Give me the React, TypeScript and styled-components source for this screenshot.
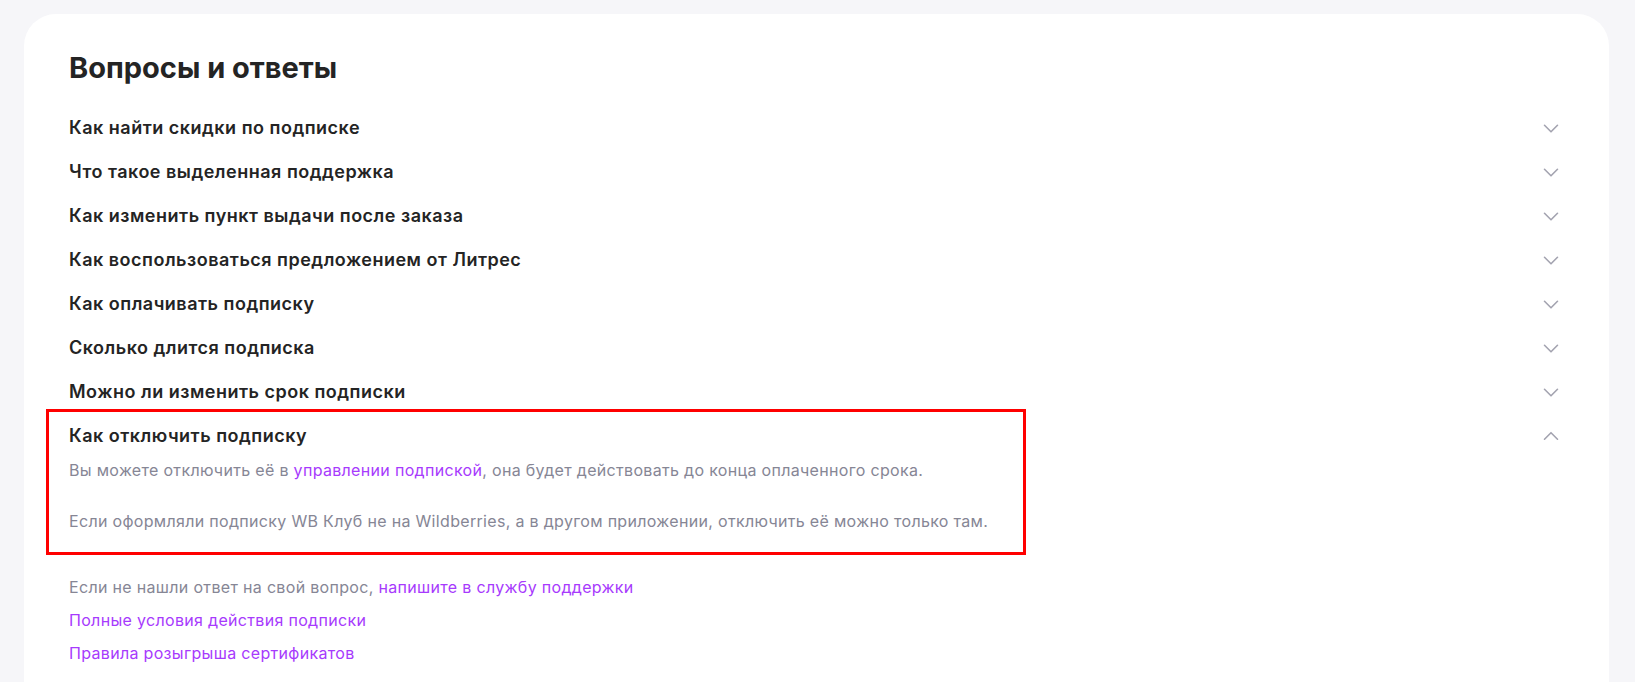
import React from "react";
import styled, { createGlobalStyle } from "styled-components";

const GlobalStyle = createGlobalStyle`
  html, body {
    margin: 0;
    padding: 0;
    background: #f6f6f9;
    overflow: hidden;
  }
  body {
    font-family: Inter, "Noto Sans", "Liberation Sans", Arial, sans-serif;
    -webkit-font-smoothing: antialiased;
  }
`;

const Page = styled.main`
  padding: 14px 26px 0 24px;
`;

const Card = styled.section`
  background: #ffffff;
  border-radius: 32px 32px 0 0;
  padding: 36px 46px 0 45px;
  min-height: calc(100vh - 14px);
  box-sizing: border-box;
`;

const Title = styled.h2`
  margin: 0 0 20px;
  font-size: 29px;
  line-height: 36px;
  font-weight: 700;
  color: #242424;
`;

const List = styled.div`
  display: flex;
  flex-direction: column;
`;

const Item = styled.div`
  position: relative;
`;

const Header = styled.button`
  display: flex;
  align-items: center;
  justify-content: space-between;
  width: 100%;
  height: 44px;
  padding: 0;
  border: 0;
  background: none;
  font: inherit;
  text-align: left;
  cursor: pointer;
`;

const Question = styled.span`
  font-size: 18px;
  line-height: 24px;
  font-weight: 600;
  letter-spacing: 0.5px;
  color: #242424;
`;

const ChevronBox = styled.span`
  display: flex;
  width: 24px;
  height: 24px;
  color: #a3a3b0;
`;

const Answer = styled.div`
  display: flex;
  flex-direction: column;
  gap: 27px;
`;

const Paragraph = styled.p`
  margin: 0;
  font-size: 16px;
  line-height: 24px;
  letter-spacing: 0.32px;
  color: #868695;
`;

const Link = styled.a`
  color: #a73afd;
  text-decoration: none;
`;

const Highlight = styled.div`
  position: absolute;
  top: -5px;
  left: -23px;
  width: 980px;
  height: 146px;
  border: 3px solid #ff0000;
  box-sizing: border-box;
  pointer-events: none;
`;

const Footer = styled.div`
  display: flex;
  flex-direction: column;
  gap: 9px;
  margin-top: 42px;
`;

const FooterLine = styled.div`
  font-size: 16px;
  line-height: 24px;
  letter-spacing: 0.32px;
  color: #868695;
`;

const Chevron = ({ up }: { up?: boolean }) => (
  <ChevronBox>
    <svg width="24" height="24" viewBox="0 0 24 24" fill="none">
      <path
        d={up ? "M5.5 15.2 L12 8.7 L18.5 15.2" : "M5.5 9.3 L12 15.8 L18.5 9.3"}
        stroke="currentColor"
        strokeWidth="1.6"
        strokeLinecap="round"
        strokeLinejoin="round"
      />
    </svg>
  </ChevronBox>
);

const questions = [
  "Как найти скидки по подписке",
  "Что такое выделенная поддержка",
  "Как изменить пункт выдачи после заказа",
  "Как воспользоваться предложением от Литрес",
  "Как оплачивать подписку",
  "Сколько длится подписка",
  "Можно ли изменить срок подписки",
];

export default function App() {
  return (
    <>
      <GlobalStyle />
      <Page>
        <Card>
          <Title>Вопросы и ответы</Title>
          <List>
            {questions.map((q) => (
              <Item key={q}>
                <Header type="button">
                  <Question>{q}</Question>
                  <Chevron />
                </Header>
              </Item>
            ))}
            <Item>
              <Header type="button">
                <Question>Как отключить подписку</Question>
                <Chevron up />
              </Header>
              <Answer>
                <Paragraph>
                  Вы можете отключить её в <Link href="#">управлении подпиской</Link>, она
                  будет действовать до конца оплаченного срока.
                </Paragraph>
                <Paragraph>
                  Если оформляли подписку WB Клуб не на Wildberries, а в другом приложении,
                  отключить её можно только там.
                </Paragraph>
              </Answer>
              <Highlight />
            </Item>
          </List>
          <Footer>
            <FooterLine>
              Если не нашли ответ на свой вопрос,{" "}
              <Link href="#">напишите в службу поддержки</Link>
            </FooterLine>
            <FooterLine>
              <Link href="#">Полные условия действия подписки</Link>
            </FooterLine>
            <FooterLine>
              <Link href="#">Правила розыгрыша сертификатов</Link>
            </FooterLine>
          </Footer>
        </Card>
      </Page>
    </>
  );
}
